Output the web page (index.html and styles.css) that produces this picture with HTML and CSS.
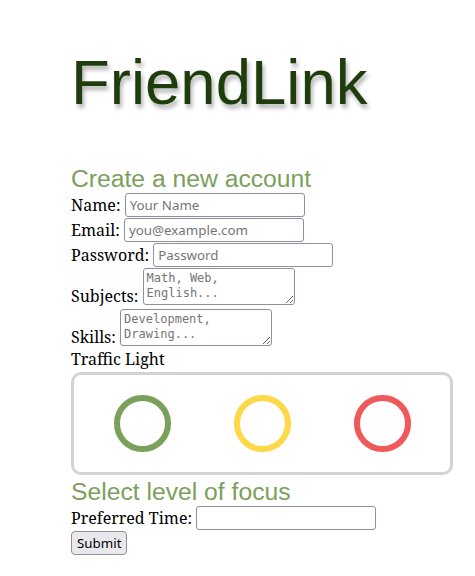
FILE: index.html
```html
<!DOCTYPE html>
<html>
<head>
<meta charset="utf-8">
<link rel="stylesheet" href="styles.css">
</head>
<body>
<div class="page">
  <h1 class="brand">FriendLink</h1>
  <form class="signup">
    <h2 class="section">Create a new account</h2>
    <div class="row"><label>Name:</label> <input class="field" type="text" placeholder="Your Name"></div>
    <div class="row"><label>Email:</label> <input class="field" type="text" placeholder="you@example.com"></div>
    <div class="row"><label>Password:</label> <input class="field" type="password" placeholder="Password"></div>
    <div class="row-area"><label>Subjects:</label> <textarea class="area" placeholder="Math, Web, English..."></textarea></div>
    <div class="row-area"><label>Skills:</label> <textarea class="area" placeholder="Development, Drawing..."></textarea></div>
    <div class="caption">Traffic Light</div>
    <div class="lights">
      <span class="light green"></span>
      <span class="light yellow"></span>
      <span class="light red"></span>
    </div>
    <h2 class="section focus">Select level of focus</h2>
    <div class="row"><label>Preferred Time:</label> <input class="field" type="text"></div>
    <div class="actions"><button class="submit" type="button">Submit</button></div>
  </form>
</div>
</body>
</html>
```
FILE: styles.css
```css
body {
  margin: 8px;
  font-family: "Noto Serif", serif;
  font-size: 16px;
}
.page {
  padding-top: 38px;
  margin-left: 63px;
  margin-right: 14px;
}
.brand {
  font-family: "Liberation Sans", Arial, sans-serif;
  font-weight: normal;
  font-size: 63.5px;
  line-height: 72px;
  color: #1f3d0c;
  text-shadow: 2px 4px 4px rgba(0,0,0,0.3);
  margin: 0 0 47px 0;
}
.section {
  font-family: "Liberation Sans", Arial, sans-serif;
  font-weight: normal;
  font-size: 24.7px;
  line-height: 28px;
  color: #7ba05b;
  margin: 0;
}
.focus {
  margin-top: 3px;
}
.row {
  line-height: 25px;
}
.row-area {
  line-height: 25px;
}
.caption {
  line-height: 18px;
}
.field {
  width: 180px;
  box-sizing: border-box;
  height: 24px;
  margin: 0;
  vertical-align: top;
  font-family: "Noto Sans", sans-serif;
  font-size: 13.33px;
  padding: 1px 4px;
  border: 1px solid #8f8f9d;
  border-radius: 3px;
  background: #fff;
}
.field::placeholder {
  color: #757575;
}
.area {
  width: 152px;
  height: 37px;
  box-sizing: border-box;
  margin: 0;
  font-family: "DejaVu Sans Mono", monospace;
  font-size: 12px;
  line-height: 15px;
  padding: 2px 3px;
  border: 1px solid #8f8f9d;
  border-radius: 3px;
  vertical-align: -3px;
  resize: both;
}
.area::placeholder {
  color: #757575;
}
.lights {
  border: 3px solid #d3d3d3;
  border-radius: 10px;
  height: 97px;
  display: flex;
  align-items: center;
  justify-content: center;
  gap: 63px;
  margin-top: 4px;
}
.light {
  width: 45px;
  height: 45px;
  border-radius: 50%;
  border: 6px solid;
}
.green { border-color: #7ba05b; box-shadow: inset -3px -1px 3px rgba(255,255,255,0.6), 0 0 1px rgba(123,160,91,0.5); }
.yellow { border-color: #fdd94a; box-shadow: inset -3px -1px 3px rgba(255,255,255,0.6), 0 0 1px rgba(253,217,74,0.5); }
.red { border-color: #f0595a; box-shadow: inset -3px -1px 3px rgba(255,255,255,0.6), 0 0 1px rgba(240,89,90,0.5); }
.actions {
  line-height: 0;
}
.submit {
  font-family: "Noto Sans", sans-serif;
  font-size: 13.33px;
  line-height: 18px;
  height: 24px;
  padding: 1px 5px;
  margin: 0;
  color: #000;
  background: #e9e9ed;
  border: 1px solid #8f8f9d;
  border-radius: 4px;
}
```
